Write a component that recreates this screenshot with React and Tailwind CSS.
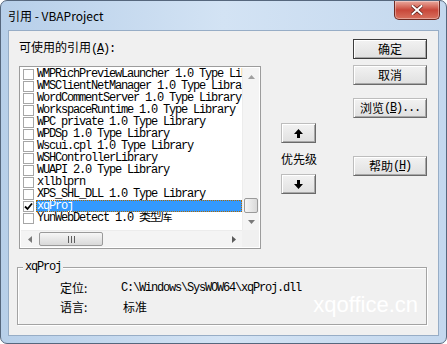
const MONO = "font-['Liberation_Mono','Noto_Sans_CJK_SC',monospace] text-[12px] tracking-[-1.2px]";
const SANS = "font-['Noto_Sans_CJK_SC','Liberation_Sans',sans-serif] text-[12px]";

const REFS = [
  "WMPRichPreviewLauncher 1.0 Type Library",
  "WMSClientNetManager 1.0 Type Library",
  "WordCommentServer 1.0 Type Library",
  "WorkspaceRuntime 1.0 Type Library",
  "WPC private 1.0 Type Library",
  "WPDSp 1.0 Type Library",
  "Wscui.cpl 1.0 Type Library",
  "WSHControllerLibrary",
  "WUAPI 2.0 Type Library",
  "xllblprn",
  "XPS_SHL_DLL 1.0 Type Library",
  "xqProj",
  "YunWebDetect 1.0 类型库",
];

function Btn({ children, def, className = "" }) {
  return (
    <div
      className={`h-[20px] flex items-center justify-center border bg-linear-to-b from-[#f2f2f2] to-[#e0e0e0] shadow-[inset_1px_1px_0_#ffffff,inset_-1px_-1px_0_#a8a8a8] text-black ${
        def ? "border-[#3c3c3c]" : "border-t-[#bdbdbd] border-l-[#bdbdbd] border-r-[#6a6a6a] border-b-[#6a6a6a]"
      } ${className}`}
    >
      {children}
    </div>
  );
}

function Mono({ children }) {
  return <span className={MONO}>{children}</span>;
}

function Tri({ dir, color = "#606060" }) {
  const pts = {
    up: "0,4 3.5,0 7,4",
    down: "0,0 7,0 3.5,4",
    left: "4,0 4,7 0,3.5",
    right: "0,0 0,7 4,3.5",
  }[dir];
  const vertical = dir === "up" || dir === "down";
  return (
    <svg width={vertical ? 7 : 4} height={vertical ? 4 : 7} viewBox={vertical ? "0 0 7 4" : "0 0 4 7"}>
      <polygon points={pts} fill={color} />
    </svg>
  );
}

function Arrow({ up }) {
  return (
    <svg width="9" height="9" viewBox="0 0 9 9">
      <polygon
        points={up ? "4.5,0 9,5 6,5 6,9 3,9 3,5 0,5" : "4.5,9 9,4 6,4 6,0 3,0 3,4 0,4"}
        fill="#000"
      />
    </svg>
  );
}

function Row({ text, checked, selected }) {
  return (
    <div className="h-[12px] flex items-center shrink-0">
      <div className="ml-[2px] w-[11px] h-[11px] border border-[#a6a6a6] bg-white flex items-center justify-center shrink-0">
        {checked && (
          <svg width="9" height="9" viewBox="0 0 9 9">
            <path d="M1 4.5 L3.5 7 L8 1.5" stroke="#000" strokeWidth="1.8" fill="none" />
          </svg>
        )}
      </div>
      <div
        className={`ml-[2px] flex-1 h-[12px] leading-[12px] whitespace-nowrap overflow-hidden pl-[1px] ${MONO} ${
          selected ? "bg-[#3399ff] text-white outline outline-dotted outline-[#b06a00] -outline-offset-1" : "text-black"
        }`}
      >
        {text}
      </div>
    </div>
  );
}

export default function App() {
  return (
    <div className="w-[447px] h-[344px] overflow-hidden rounded-[7px] border border-[#56677d] bg-linear-to-r from-[#b7cfe9] via-[#d3e3f4] to-[#c4d8ee] flex flex-col">
      {/* title bar */}
      <div className="h-[29px] flex justify-between shrink-0">
        <div className={`pl-[7px] flex items-center text-black ${SANS}`}>引用 - VBAProject</div>
        <div className="mr-[6px] w-[46px] h-[19px] rounded-b-[5px] border border-t-0 border-[#6e2a22] bg-linear-to-b from-[#e9a99e] via-[#c8473a] to-[#d8715f] flex items-center justify-center shadow-[inset_0_0_0_1px_rgba(255,255,255,0.35)]">
          <svg width="12" height="10" viewBox="0 0 12 10">
            <path d="M1.5 1 L10.5 9 M10.5 1 L1.5 9" stroke="#5a1e18" strokeWidth="3.4" strokeLinecap="square" />
            <path d="M1.5 1 L10.5 9 M10.5 1 L1.5 9" stroke="#ffffff" strokeWidth="2" strokeLinecap="square" />
          </svg>
        </div>
      </div>

      {/* client area */}
      <div className="mx-[7px] h-[306px] shrink-0 bg-[#f0f0f0] border border-[#97adc6]">
        <div className="flex items-start pl-[10px] pt-[8px]">
          {/* references list */}
          <div className="w-[242px]">
            <div className={`mt-[1px] h-[14px] leading-[14px] text-black ${SANS}`}>
              可使用的引用<Mono>(<u>A</u>):</Mono>
            </div>
            <div className="mt-[12px] w-[242px] h-[183px] border border-[#9c9c9c] bg-white p-[1px] flex flex-col">
              <div className="flex h-[162px]">
                <div className="flex-1 flex flex-col overflow-hidden">
                  {REFS.map((r, i) => (
                    <Row key={r} text={r} checked={i === 11} selected={i === 11} />
                  ))}
                </div>
                <div className="w-[17px] flex flex-col bg-[#f4f4f4] border-l border-[#ececec]">
                  <div className="h-[17px] flex items-center justify-center">
                    <Tri dir="up" color="#a0a0a0" />
                  </div>
                  <div className="flex-1" />
                  <div className="h-[15px] mx-[1px] rounded-[2px] border border-[#9a9a9a] bg-linear-to-r from-[#f6f6f6] to-[#d9d9d9]" />
                  <div className="h-[17px] flex items-center justify-center">
                    <Tri dir="down" color="#7a7a7a" />
                  </div>
                </div>
              </div>
              <div className="flex h-[17px]">
                <div className="flex-1 flex bg-[#f4f4f4] border-t border-[#ececec]">
                  <div className="w-[17px] flex items-center justify-center">
                    <Tri dir="left" color="#7a7a7a" />
                  </div>
                  <div className="w-[64px] my-[1px] ml-[1px] rounded-[2px] border border-[#9a9a9a] bg-linear-to-b from-[#f6f6f6] to-[#d9d9d9] flex items-center justify-center gap-[2px]">
                    <div className="w-[1px] h-[7px] bg-[#5e5e5e]" />
                    <div className="w-[1px] h-[7px] bg-[#5e5e5e]" />
                    <div className="w-[1px] h-[7px] bg-[#5e5e5e]" />
                  </div>
                  <div className="flex-1" />
                  <div className="w-[17px] flex items-center justify-center">
                    <Tri dir="right" color="#5a5a5a" />
                  </div>
                </div>
                <div className="w-[17px] bg-[#f0f0f0]" />
              </div>
            </div>
          </div>

          {/* priority */}
          <div className="ml-[20px] w-[35px] mt-[84px] flex flex-col">
            <Btn>
              <Arrow up />
            </Btn>
            <div className={`mt-[9px] h-[14px] leading-[14px] text-center text-black whitespace-nowrap ${SANS}`}>优先级</div>
            <Btn className="mt-[8px]">
              <Arrow />
            </Btn>
          </div>

          {/* buttons */}
          <div className={`ml-[37px] w-[74px] flex flex-col ${SANS}`}>
            <Btn def>确定</Btn>
            <Btn className="mt-[6px]">取消</Btn>
            <Btn className="mt-[13px]">
              浏览<Mono>(<u>B</u>)...</Mono>
            </Btn>
            <Btn className="mt-[38px]">
              帮助<Mono>(<u>H</u>)</Mono>
            </Btn>
          </div>
        </div>

        {/* details group */}
        <div className="relative ml-[8px] mt-[18px] w-[410px] h-[58px] border border-[#a3a3a3] shadow-[1px_1px_0_#ffffff,inset_1px_1px_0_#ffffff]">
          <div className={`absolute left-[5px] -top-[7px] px-[2px] h-[12px] leading-[12px] bg-[#f0f0f0] text-black ${MONO}`}>
            xqProj
          </div>
          <div className={`pl-[42px] pt-[13px] flex flex-col gap-[5px] text-black ${SANS}`}>
            <div className="h-[14px] leading-[14px] flex">
              <div className="w-[61px]">定位:</div>
              <Mono>C:\Windows\SysWOW64\xqProj.dll</Mono>
            </div>
            <div className="h-[14px] leading-[14px] flex">
              <div className="w-[61px]">语言:</div>
              <div className="ml-[2px]">标准</div>
            </div>
          </div>
          <div className="absolute right-[8px] top-[25px] leading-[24px] text-[22px] text-white font-['Liberation_Sans',sans-serif]">
            xqoffice.cn
          </div>
        </div>
      </div>
    </div>
  );
}
